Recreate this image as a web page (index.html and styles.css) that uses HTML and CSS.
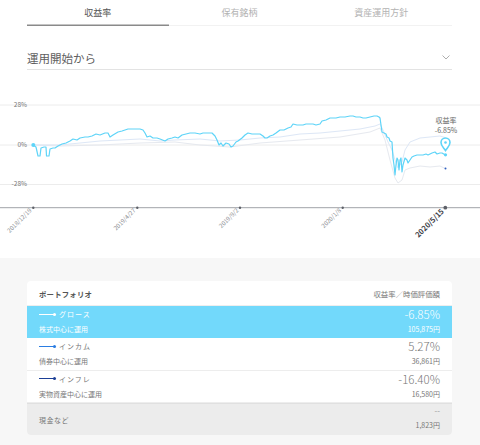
FILE: index.html
```html
<!DOCTYPE html>
<html lang="ja">
<head>
<meta charset="utf-8">
<link rel="stylesheet" href="styles.css">
</head>
<body>
<div class="tabs">
  <div class="tab active">収益率</div>
  <div class="tab">保有銘柄</div>
  <div class="tab">資産運用方針</div>
</div>
<div class="select">
  <span>運用開始から</span>
  <svg class="chev" width="8" height="5" viewBox="0 0 8 5"><path d="M0.5 0.5 L4 4 L7.5 0.5" fill="none" stroke="#999" stroke-width="0.8"/></svg>
</div>
<svg class="chart" width="480" height="188" viewBox="0 70 480 188">
  <g stroke="#ececec" stroke-width="1">
    <line x1="0" y1="105" x2="480" y2="105"/>
    <line x1="0" y1="145" x2="480" y2="145"/>
    <line x1="0" y1="184.5" x2="480" y2="184.5"/>
  </g>
  <g class="ylab" text-anchor="end">
    <text x="27" y="106.5">28%</text>
    <text x="27" y="146.5">0%</text>
    <text x="27" y="186">-28%</text>
  </g>
  <polyline fill="none" stroke="#e6e9ef" stroke-width="1" points="33,145 60,146 100,145 140,143 175,142 200,145 230,147 260,143 300,140 340,137 370,132 380,128 385,140 390,160 395,178 398,183 402,180 405,170 410,168 420,166 430,167 440,166 445,168.4"/>
  <polyline fill="none" stroke="#dde7f6" stroke-width="1" points="33,145 60,145 80,143 100,141 120,140 140,139 160,141 175,140 200,139 220,141 240,140 260,138 280,137 300,134 320,133 340,131 360,129 375,126 380,124 383,130 388,142 392,150 395,160 398,168 402,162 405,150 410,142 420,138 430,137 440,136 445,137.5"/>
  <polyline fill="none" stroke="#5ed4f8" stroke-width="1.2" stroke-linejoin="round" points="33,145 36,147 38,156 40,156 41,148 44,147 46,147 46.5,156 49,156 50,149 53,148 55,148 58,146 62,144 66,143 70,141 73,139 77,140 80,138 85,137 88,137 92,136 96,134 100,135 105,133 108,133 110,137 113,135 118,132 122,131 125,130 128,129 135,129 140,129 143,130 145,133 147,137 150,136 153,138 157,138 160,139 165,141 168,139 172,138 175,137 178,138 182,135 186,134 190,133 195,133 200,134 203,133 208,133 212,133 215,136 217,140 219,145 221,143 223,146 226,143 229,144 231,147 233,146 236,142 238,141 242,138 245,135 248,133 252,134 256,134 260,134 263,136 265,138 267,138 270,136 273,135 276,133 280,130 284,130 288,128 291,127 293,124 297,125 300,125 303,125 306,124 310,124 313,124 316,125 320,124 322,121 326,120 330,118 333,118 336,118 340,117 345,117 350,116 353,116 356,117 360,117 363,118 366,118 370,117 374,116 377,116 379,117 380,118 382,132 384,133 386,134 387,137 389,138 390,141 392,142 393,158 394,165 395,175 396,165 397,158 398,160 399,170 400,160 401,158 402,172 403,165 405,158 407,160 408,163 410,160 412,157 414,156 417,155 420,155 423,155 426,154 428,155 430,154 432,153 435,152 437,154 440,153 442,153 445,154.8"/>
  <circle cx="33.3" cy="145" r="2" fill="#5ed4f8"/>
  <circle cx="445.5" cy="154.8" r="1.6" fill="#5ed4f8"/>
  <circle cx="445.5" cy="168.4" r="1" fill="#2f5fc0"/>
  <path d="M445.5 150.5 C443 147 441 145.5 441 142.5 A4.5 4.5 0 0 1 450 142.5 C450 145.5 448 147 445.5 150.5 Z" fill="#fff" stroke="#5ed4f8" stroke-width="1.6"/>
  <circle cx="445.5" cy="142.5" r="1.3" fill="#5ed4f8"/>
  <g class="plab" text-anchor="middle">
    <text x="446" y="123">収益率</text>
    <text x="446" y="133">-6.85%</text>
  </g>
  <line x1="0" y1="207.7" x2="480" y2="207.7" stroke="#a0a3a8" stroke-width="1"/>
  <g fill="#5d6068">
    <circle cx="33.3" cy="207.7" r="1.2"/>
    <circle cx="137.3" cy="207.7" r="1.2"/>
    <circle cx="240" cy="207.7" r="1.2"/>
    <circle cx="342.7" cy="207.7" r="1.2"/>
    <circle cx="445.3" cy="207.7" r="1.9"/>
  </g>
  <g class="xlab" text-anchor="end">
    <text transform="translate(32 211) rotate(-45)">2018/12/19</text>
    <text transform="translate(136 211) rotate(-45)">2019/4/27</text>
    <text transform="translate(239 211) rotate(-45)">2019/9/2</text>
    <text transform="translate(341.5 211) rotate(-45)">2020/1/8</text>
    <text class="cur" transform="translate(444.5 212) rotate(-45)">2020/5/15</text>
  </g>
</svg>
<div class="bottom">
  <div class="card">
    <div class="card-head">
      <span class="bold">ポートフォリオ</span>
      <span>収益率／時価評価額</span>
    </div>
    <div class="row growth">
      <div class="l1"><span class="name"><i class="mark"></i>グロース</span><span class="val">-6.85%</span></div>
      <div class="l2"><span>株式中心に運用</span><span>105,875円</span></div>
    </div>
    <div class="row income">
      <div class="l1"><span class="name"><i class="mark"></i>インカム</span><span class="val">5.27%</span></div>
      <div class="l2"><span>債券中心に運用</span><span>36,861円</span></div>
    </div>
    <div class="row infl">
      <div class="l1"><span class="name"><i class="mark"></i>インフレ</span><span class="val">-16.40%</span></div>
      <div class="l2"><span>実物資産中心に運用</span><span>16,580円</span></div>
    </div>
    <div class="row cash">
      <span class="cash-name">現金など</span>
      <div class="cash-vals"><span class="dash">--</span><span>1,823円</span></div>
    </div>
  </div>
</div>
</body>
</html>
```
FILE: styles.css
```css
html, body {
  margin: 0;
  padding: 0;
  background: #fff;
  font-family: "Noto Sans CJK JP", "Noto Sans", sans-serif;
  color: #666;
}
.tabs {
  display: flex;
  margin: 0 28px 0 27px;
  border-bottom: 1px solid #f2f2f2;
  height: 25px;
}
.tab {
  flex: 1;
  text-align: center;
  font-size: 9px;
  line-height: 25px;
  color: #b3b3b3;
}
.tab.active {
  color: #555;
  box-shadow: inset 0 -1.5px 0 #8a8a8a;
  margin-bottom: -1px;
}
.select {
  margin: 20px 28px 0 27px;
  height: 23px;
  border-bottom: 1px solid #e3e3e3;
  display: flex;
  align-items: center;
  justify-content: space-between;
  font-size: 11.5px;
  color: #606060;
}
.chev { margin-right: 2px; }
.chart { display: block; }
.ylab text { font-size: 6.5px; fill: #777; }
.plab text { font-size: 7px; fill: #666; }
.xlab text { font-size: 6px; fill: #8b8d92; }
.xlab text.cur { font-size: 7.5px; fill: #3e4048; font-weight: bold; }
.bottom {
  background: #f7f7f7;
  height: 187px;
  padding-top: 23px;
  box-sizing: border-box;
}
.card {
  margin: 0 28px 0 27px;
  background: #fff;
  border-radius: 4px;
  overflow: hidden;
  height: 154px;
}
.card-head {
  height: 25px;
  display: flex;
  align-items: center;
  justify-content: space-between;
  padding: 0 12px;
  font-size: 7.4px;
  color: #777;
  border-bottom: 1px solid #eee;
  box-sizing: border-box;
}
.bold { font-weight: bold; color: #555; letter-spacing: 0.2px; }
.row {
  height: 32.3px;
  padding: 0 12px;
  box-sizing: border-box;
  border-bottom: 1px solid #ededed;
}
.l1, .l2 {
  display: flex;
  justify-content: space-between;
  align-items: center;
}
.l1 { height: 16px; }
.l2 { height: 14px; font-size: 7px; color: #777; }
.name {
  display: flex;
  align-items: center;
  font-size: 7px;
  letter-spacing: 1px;
  color: #777;
}
.mark {
  position: relative;
  display: inline-block;
  width: 16px;
  height: 1px;
  background: currentColor;
  margin-right: 4px;
}
.mark::after {
  content: "";
  position: absolute;
  right: -1px;
  top: -1px;
  width: 3px;
  height: 3px;
  border-radius: 50%;
  background: currentColor;
}
.val { font-size: 11.5px; font-weight: 300; color: #777; }
.growth { background: #72d9fb; border-bottom-color: #72d9fb; }
.growth .name, .growth .l2, .growth .val { color: #fff; }
.growth .mark { color: #fff; }
.income .mark { color: #2b7de2; }
.infl .mark { color: #1c3f96; }
.cash {
  background: #ececec;
  border-top: 1px solid #e0e0e0;
  border-bottom: none;
  display: flex;
  justify-content: space-between;
  align-items: center;
  height: 33px;
}
.cash-name { font-size: 7px; color: #777; letter-spacing: 0.5px; }
.cash-vals {
  display: flex;
  flex-direction: column;
  align-items: flex-end;
  font-size: 7px;
  color: #777;
}
.dash { font-size: 8px; line-height: 12px; color: #999; margin-top: -2px; }
.cash-vals span:last-child { line-height: 16px; }
```
